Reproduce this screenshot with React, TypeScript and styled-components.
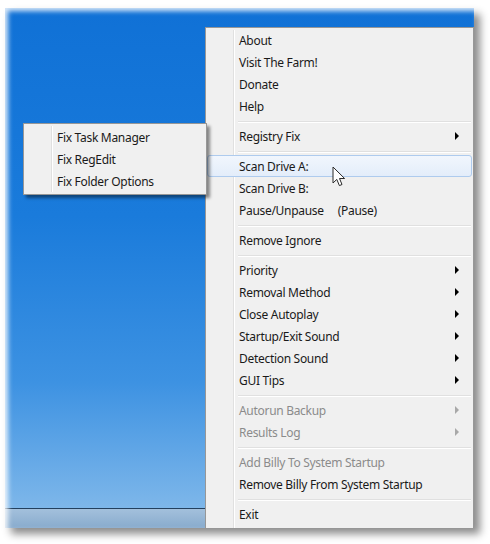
import React from "react";
import styled, { createGlobalStyle } from "styled-components";

const GlobalStyle = createGlobalStyle`
    html, body {
        margin: 0;
        padding: 0;
        background: #fff;
    }
    body {
        font-family: "Noto Sans", "Open Sans", sans-serif;
        font-size: 12px;
        letter-spacing: -0.3px;
    }
`;

const colors = {
    menuBg: "#f0f0f0",
    menuBorder: "#979797",
    text: "#1a1a1a",
    disabled: "#8b8b8b",
    gutter: "#e0e0e0",
    hoverBorder: "#aecbee",
};

const Page = styled.div`
    width: 490px;
    height: 544px;
    padding: 8px 0 0 5px;
    box-sizing: border-box;
`;

const Desktop = styled.div`
    position: relative;
    width: 469px;
    height: 520px;
    overflow: hidden;
    display: flex;
    justify-content: flex-end;
    align-items: flex-start;
    padding-top: 19px;
    box-sizing: border-box;
    background:
        linear-gradient(180deg, transparent 500px, #23405e 500px, #23405e 501px, #a3c0dc 501px, #88abcd 520px),
        linear-gradient(180deg, #1071d6 0%, #1a7bdb 40%, #3d92e2 72%, #80b8ea 97%);
    box-shadow: 6px 6px 8px rgba(0, 0, 0, 0.45), inset 3px 3px 5px rgba(255, 255, 255, 0.85);
`;

const Menu = styled.div<{ $width: number }>`
    position: relative;
    width: ${(p) => p.$width}px;
    box-sizing: border-box;
    background: ${colors.menuBg};
    border: 1px solid ${colors.menuBorder};
    padding: 2px;
    color: ${colors.text};

    &::before {
        content: "";
        position: absolute;
        top: 2px;
        bottom: 2px;
        left: 27px;
        width: 1px;
        background: ${colors.gutter};
        box-shadow: 1px 0 0 #fff;
    }
`;

const MainMenu = styled(Menu)`
    height: 520px;
    padding-top: 1px;
`;

const SubMenu = styled(Menu)`
    position: absolute;
    left: 18px;
    top: 115px;
    box-shadow: 3px 3px 3px rgba(0, 0, 0, 0.45);
    z-index: 2;
`;

const Item = styled.div<{ $disabled?: boolean; $hover?: boolean }>`
    position: relative;
    display: flex;
    align-items: center;
    height: 22px;
    padding: 0 12px 0 31px;
    box-sizing: border-box;
    white-space: nowrap;
    color: ${(p) => (p.$disabled ? colors.disabled : colors.text)};
    border: 1px solid ${(p) => (p.$hover ? colors.hoverBorder : "transparent")};
    border-radius: 3px;
    background: ${(p) => (p.$hover ? "linear-gradient(180deg, #f1f6fd 0%, #e3edfa 100%)" : "transparent")};
    margin: 0 -1px;
`;

const Label = styled.span`
    flex: 1;
`;

const Shortcut = styled.span`
    margin-left: 14px;
`;

const Arrow = styled.span<{ $disabled?: boolean }>`
    width: 0;
    height: 0;
    border-top: 4px solid transparent;
    border-bottom: 4px solid transparent;
    border-left: 4px solid ${(p) => (p.$disabled ? "#a8a8a8" : "#000")};
`;

const Separator = styled.div`
    height: 8px;
    display: flex;
    align-items: center;
    padding-left: 30px;

    &::after {
        content: "";
        flex: 1;
        height: 1px;
        background: ${colors.gutter};
        box-shadow: 0 1px 0 #fff;
    }
`;

const Cursor = styled.svg`
    position: absolute;
    left: 327px;
    top: 158px;
    z-index: 3;
`;

type Entry =
    | { sep: true }
    | { label: string; shortcut?: string; sub?: boolean; disabled?: boolean; hover?: boolean; sep?: false };

const mainItems: Entry[] = [
    { label: "About" },
    { label: "Visit The Farm!" },
    { label: "Donate" },
    { label: "Help" },
    { sep: true },
    { label: "Registry Fix", sub: true },
    { sep: true },
    { label: "Scan Drive A:", hover: true },
    { label: "Scan Drive B:" },
    { label: "Pause/Unpause", shortcut: "(Pause)" },
    { sep: true },
    { label: "Remove Ignore" },
    { sep: true },
    { label: "Priority", sub: true },
    { label: "Removal Method", sub: true },
    { label: "Close Autoplay", sub: true },
    { label: "Startup/Exit Sound", sub: true },
    { label: "Detection Sound", sub: true },
    { label: "GUI Tips", sub: true },
    { sep: true },
    { label: "Autorun Backup", sub: true, disabled: true },
    { label: "Results Log", sub: true, disabled: true },
    { sep: true },
    { label: "Add Billy To System Startup", disabled: true },
    { label: "Remove Billy From System Startup" },
    { sep: true },
    { label: "Exit" },
];

const subItems: Entry[] = [
    { label: "Fix Task Manager" },
    { label: "Fix RegEdit" },
    { label: "Fix Folder Options" },
];

const renderEntries = (entries: Entry[]) =>
    entries.map((e, i) =>
        e.sep ? (
            <Separator key={i} />
        ) : (
            <Item key={i} $disabled={e.disabled} $hover={e.hover}>
                <Label>
                    {e.label}
                    {e.shortcut && <Shortcut>{e.shortcut}</Shortcut>}
                </Label>
                {e.sub && <Arrow $disabled={e.disabled} />}
            </Item>
        )
    );

const App: React.FC = () => {
    return (
        <Page>
            <GlobalStyle />
            <Desktop>
                <MainMenu $width={269}>{renderEntries(mainItems)}</MainMenu>
                <SubMenu $width={184}>{renderEntries(subItems)}</SubMenu>
                <Cursor width="14" height="22" viewBox="0 0 14 22">
                    <path
                        d="M1 1 L1 17 L4.8 13.4 L7.4 19.6 L10 18.5 L7.5 12.5 L12.6 12.5 Z"
                        fill="#fff"
                        stroke="#2a2a2a"
                        strokeWidth="1"
                        strokeLinejoin="round"
                    />
                </Cursor>
            </Desktop>
        </Page>
    );
};

export default App;
